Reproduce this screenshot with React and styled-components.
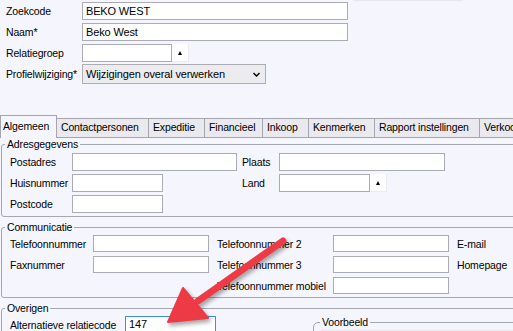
import styled, { createGlobalStyle } from 'styled-components';

const GlobalStyle = createGlobalStyle`
	html, body {
		margin: 0;
		padding: 0;
		background: #f5f6fd;
	}
`;

const Page = styled.div`
	position: relative;
	width: 513px;
	height: 331px;
	overflow: hidden;
	background: #f5f6fd;
	font-family: 'Liberation Sans', Tahoma, Arial, sans-serif;
	font-size: 10.5px;
	letter-spacing: -0.15px;
	color: #000;
`;

// bovenste formulier
const Header = styled.div`
	display: flex;
	flex-direction: column;
	gap: 3px;
	padding: 2px 0 0 6px;
`;

const FieldRow = styled.div`
	display: flex;
	align-items: center;
	height: ${(p) => p.$h || 18}px;
	margin-top: ${(p) => p.$mt || 0}px;
`;

const Label = styled.span`
	flex-shrink: 0;
	width: ${(p) => p.$w}px;
	white-space: nowrap;
`;

const Caption = styled.span`
	white-space: nowrap;
`;

const TextBox = styled.div`
	box-sizing: border-box;
	flex-shrink: 0;
	width: ${(p) => p.$w}px;
	height: ${(p) => p.$h || 18}px;
	background: #fff;
	border: 1px solid ${(p) => (p.$focus ? '#3c8ee8' : '#aaabb5')};
	padding-left: 3px;
	line-height: ${(p) => (p.$h || 18) - 2}px;
	font-size: 11px;
	white-space: nowrap;
	overflow: hidden;
`;

const PickButton = styled.div`
	box-sizing: border-box;
	flex-shrink: 0;
	width: 17px;
	height: 18px;
	background: #fdfdfd;
	border-right: 1px solid #ececf0;
	border-bottom: 1px solid #ececf0;
	display: flex;
	align-items: center;
	justify-content: center;
	&::after {
		content: '';
		border-left: 2.5px solid transparent;
		border-right: 2.5px solid transparent;
		border-bottom: 4px solid #000;
	}
`;

const Select = styled.div`
	box-sizing: border-box;
	width: 184px;
	height: 20px;
	background: #ececee;
	border: 1px solid #acacb2;
	display: flex;
	align-items: center;
	justify-content: space-between;
	padding: 0 5px 0 3px;
	font-size: 11px;
`;

const Ghost = styled.div`
	align-self: flex-start;
	width: 110px;
	height: 0;
	margin: -2px 0 0 5px;
	border-bottom: 1px solid #e6e7ee;
`;

// tabbladen
const TabStrip = styled.div`
	display: flex;
	align-items: flex-end;
	height: 23px;
	margin-top: 31px;
	overflow: hidden;
`;

const Tab = styled.div`
	box-sizing: border-box;
	flex-shrink: 0;
	width: ${(p) => p.$w}px;
	height: ${(p) => (p.$active ? 23 : 20)}px;
	padding-left: ${(p) => (p.$active ? 2 : 4)}px;
	background: ${(p) => (p.$active ? '#f5f6fd' : '#e9e9ee')};
	border: 1px solid #a5a5ae;
	border-left: ${(p) => (p.$active ? '1px solid #a5a5ae' : 'none')};
	border-bottom: ${(p) => (p.$active ? 'none' : '1px solid #a5a5ae')};
	line-height: ${(p) => (p.$active ? 20 : 17)}px;
	white-space: nowrap;
	overflow: hidden;
`;

const TabFill = styled.div`
	flex: 1;
	height: 20px;
	border-bottom: 1px solid #a5a5ae;
`;

// groepen
const Group = styled.fieldset`
	margin: ${(p) => p.$mt || 0}px 0 0 ${(p) => p.$ml || 1}px;
	padding: 0;
	width: ${(p) => p.$w || 540}px;
	min-width: 0;
	border: 1px solid #a7a7b0;
	border-radius: ${(p) => p.$r || 3}px;
	flex-shrink: 0;
`;

const Legend = styled.legend`
	margin-left: ${(p) => p.$indent || 3}px;
	padding: 0 2px;
	line-height: 13px;
	font-size: 10.5px;
	white-space: nowrap;
`;

const AddressGrid = styled.div`
	display: grid;
	grid-template-columns: 62px 170px 37px auto;
	grid-auto-rows: 18px;
	row-gap: 3px;
	align-items: center;
	padding: 2px 0 3px 8px;
`;

const CommGrid = styled.div`
	display: grid;
	grid-template-columns: 83px 124px 116px 124px auto;
	grid-auto-rows: 17px;
	row-gap: 4px;
	align-items: center;
	padding: 1px 0 3px 8px;
`;

const Combo = styled.div`
	display: flex;
`;

const OtherRow = styled.div`
	display: flex;
	align-items: flex-start;
	padding: 1px 0 0 8px;
`;

const Preview = styled.div`
	height: 20px;
	margin: 0 0 0 7px;
	background: #eeeef1;
`;

const Arrow = styled.svg`
	position: absolute;
	left: 0;
	top: 0;
	pointer-events: none;
	filter: drop-shadow(2px 3px 2px rgba(0, 0, 0, 0.35));
`;

const tabs = [
	['Contactpersonen', 92],
	['Expeditie', 56],
	['Financieel', 58],
	['Inkoop', 46],
	['Kenmerken', 66],
	['Rapport instellingen', 105],
	['Verkoop', 50],
];

export default function App() {
	return (
		<Page>
			<GlobalStyle />
			<Header>
				<FieldRow>
					<Label $w={76}>Zoekcode</Label>
					<TextBox $w={266}>BEKO WEST</TextBox>
					<Ghost />
				</FieldRow>
				<FieldRow>
					<Label $w={76}>Naam*</Label>
					<TextBox $w={266}>Beko West</TextBox>
				</FieldRow>
				<FieldRow>
					<Label $w={76}>Relatiegroep</Label>
					<TextBox $w={90} />
					<PickButton />
				</FieldRow>
				<FieldRow $h={20} $mt={-1}>
					<Label $w={76}>Profielwijziging*</Label>
					<Select>
						<span>Wijzigingen overal verwerken</span>
						<svg width="7" height="5" viewBox="0 0 7 5">
							<polyline points="0.5,1 3.5,4 6.5,1" fill="none" stroke="#000" strokeWidth="1.4" />
						</svg>
					</Select>
				</FieldRow>
			</Header>

			<TabStrip>
				<Tab $active $w={57}>Algemeen</Tab>
				{tabs.map(([t, w]) => (
					<Tab key={t} $w={w}>
						{t}
					</Tab>
				))}
				<TabFill />
			</TabStrip>

			<Group>
				<Legend>Adresgegevens</Legend>
				<AddressGrid>
					<Caption>Postadres</Caption>
					<TextBox $w={165} />
					<Caption>Plaats</Caption>
					<TextBox $w={166} />
					<Caption>Huisnummer</Caption>
					<TextBox $w={91} />
					<Caption>Land</Caption>
					<Combo>
						<TextBox $w={91} />
						<PickButton />
					</Combo>
					<Caption>Postcode</Caption>
					<TextBox $w={91} />
				</AddressGrid>
			</Group>

			<Group $mt={4}>
				<Legend>Communicatie</Legend>
				<CommGrid>
					<Caption>Telefoonnummer</Caption>
					<TextBox $w={116} $h={17} />
					<Caption>Telefoonnummer 2</Caption>
					<TextBox $w={116} $h={17} />
					<Caption>E-mail</Caption>
					<Caption>Faxnummer</Caption>
					<TextBox $w={116} $h={17} />
					<Caption>Telefoonnummer 3</Caption>
					<TextBox $w={116} $h={17} />
					<Caption>Homepage</Caption>
					<span />
					<span />
					<Caption>Telefoonnummer mobiel</Caption>
					<TextBox $w={116} $h={17} />
				</CommGrid>
			</Group>

			<Group $mt={4}>
				<Legend>Overigen</Legend>
				<OtherRow>
					<FieldRow $h={17}>
						<Label $w={115}>Alternatieve relatiecode</Label>
						<TextBox $w={91} $h={17} $focus>
							147
						</TextBox>
					</FieldRow>
					<Group $ml={97} $w={230} $r={5}>
						<Legend $indent={6}>Voorbeeld</Legend>
						<Preview />
					</Group>
				</OtherRow>
			</Group>

			<Arrow width="513" height="331" viewBox="0 0 513 331">
				<line x1="283" y1="241" x2="198" y2="301" stroke="#ee3a45" strokeWidth="7" strokeLinecap="round" />
				<polygon points="168,322 183,288 208,318" fill="#ee3a45" stroke="#ee3a45" strokeWidth="2" strokeLinejoin="round" />
			</Arrow>
		</Page>
	);
}
